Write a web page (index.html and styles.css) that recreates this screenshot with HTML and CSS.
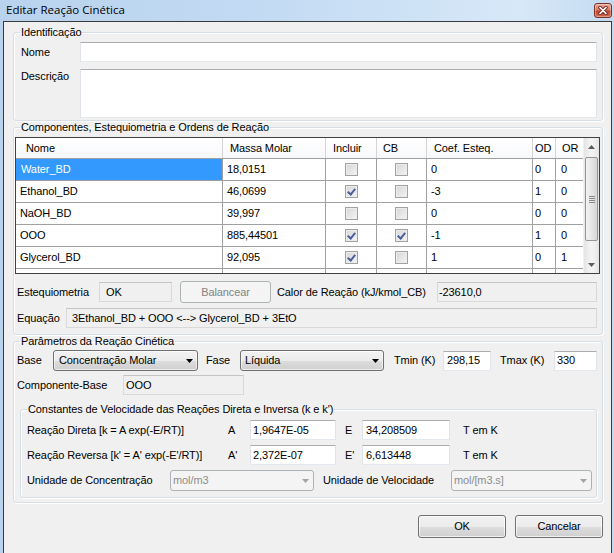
FILE: index.html
```html
<!DOCTYPE html>
<html lang="pt">
<head>
<meta charset="utf-8">
<title>Editar Reação Cinética</title>
<link rel="stylesheet" href="styles.css">
</head>
<body>
<div class="window">
  <div class="titlebar">
    <span class="title">Editar Reação Cinética</span>
    <span class="close"><svg width="10" height="9" viewBox="0 0 10 9"><path d="M2 1.5 L8 7.5 M8 1.5 L2 7.5" stroke="#6b2a20" stroke-width="3.4" stroke-linecap="round"/><path d="M2 1.5 L8 7.5 M8 1.5 L2 7.5" stroke="#fff" stroke-width="1.7" stroke-linecap="round"/></svg></span>
  </div>
  <div class="client">
    <fieldset class="group">
      <legend>Identificação</legend>
      <div class="gbody g1">
        <div class="row h20"><span class="lbl w59">Nome</span><div class="tb grow1"></div></div>
        <div class="row top mt7"><span class="lbl w59 pt1">Descrição</span><div class="tb ta grow1"></div></div>
      </div>
    </fieldset>

    <fieldset class="group mt5">
      <legend>Componentes, Estequiometria e Ordens de Reação</legend>
      <div class="gbody g2">
        <div class="dgv">
          <div class="dgv-main">
            <div class="dgv-head">
              <div class="hc pl10">Nome</div>
              <div class="hc">Massa Molar</div>
              <div class="hc">Incluir</div>
              <div class="hc pl6">CB</div>
              <div class="hc">Coef. Esteq.</div>
              <div class="hc pl2">OD</div>
              <div class="hc pl6">OR</div>
            </div>
            <div class="dgv-body">
              <div class="dc sel">Water_BD</div><div class="dc">18,0151</div><div class="dc ck"><span class="cb"></span></div><div class="dc ck"><span class="cb"></span></div><div class="dc">0</div><div class="dc n">0</div><div class="dc n2">0</div>
              <div class="dc">Ethanol_BD</div><div class="dc">46,0699</div><div class="dc ck"><span class="cb on"></span></div><div class="dc ck"><span class="cb"></span></div><div class="dc">-3</div><div class="dc n">1</div><div class="dc n2">0</div>
              <div class="dc">NaOH_BD</div><div class="dc">39,997</div><div class="dc ck"><span class="cb"></span></div><div class="dc ck"><span class="cb"></span></div><div class="dc">0</div><div class="dc n">0</div><div class="dc n2">0</div>
              <div class="dc">OOO</div><div class="dc">885,44501</div><div class="dc ck"><span class="cb on"></span></div><div class="dc ck"><span class="cb on"></span></div><div class="dc">-1</div><div class="dc n">1</div><div class="dc n2">0</div>
              <div class="dc">Glycerol_BD</div><div class="dc">92,095</div><div class="dc ck"><span class="cb on"></span></div><div class="dc ck"><span class="cb"></span></div><div class="dc">1</div><div class="dc n">0</div><div class="dc n2">1</div>
              <div class="dc"></div><div class="dc"></div><div class="dc"></div><div class="dc"></div><div class="dc"></div><div class="dc"></div><div class="dc"></div>
            </div>
          </div>
          <div class="vscroll">
            <div class="sarrow"><svg width="7" height="4" viewBox="0 0 7 4"><path d="M0 4 L3.5 0 L7 4 Z" fill="#5c5c5c"/></svg></div>
            <div class="strack">
              <div class="thumb"><span class="grip"></span></div>
            </div>
            <div class="sarrow"><svg width="7" height="4" viewBox="0 0 7 4"><path d="M0 0 L7 0 L3.5 4 Z" fill="#5c5c5c"/></svg></div>
          </div>
        </div>

        <div class="row stq">
          <span class="lbl w82">Estequiometria</span>
          <div class="tb ro w73 pad6"><span class="tv">OK</span></div>
          <div class="btn dis w91 ml8">Balancear</div>
          <span class="lbl ml6 w160">Calor de Reação (kJ/kmol_CB)</span>
          <div class="tb ro grow1 pad1"><span class="tv">-23610,0</span></div>
        </div>
        <div class="row h20 mt5 eqrow">
          <span class="lbl w49">Equação</span>
          <div class="tb ro grow1 pad5"><span class="tv">3Ethanol_BD + OOO &lt;--&gt; Glycerol_BD + 3EtO</span></div>
        </div>
      </div>
    </fieldset>

    <fieldset class="group mt5">
      <legend>Parâmetros da Reação Cinética</legend>
      <div class="gbody g3">
        <div class="row h21">
          <span class="lbl w36">Base</span>
          <div class="combo w145 cp5"><span class="cv">Concentração Molar</span><svg class="arr" width="7" height="4" viewBox="0 0 7 4"><path d="M0 0 L7 0 L3.5 4 Z" fill="#000"/></svg></div>
          <span class="lbl ml8 w34">Fase</span>
          <div class="combo w144 cp4"><span class="cv">Líquida</span><svg class="arr" width="7" height="4" viewBox="0 0 7 4"><path d="M0 0 L7 0 L3.5 4 Z" fill="#000"/></svg></div>
          <span class="lbl ml10 w49">Tmin (K)</span>
          <div class="tb w48 pad3"><span class="tv">298,15</span></div>
          <span class="lbl ml9 w54">Tmax (K)</span>
          <div class="tb w43"><span class="tv">330</span></div>
        </div>
        <div class="row h20 mt4">
          <span class="lbl w106">Componente-Base</span>
          <div class="tb ro w121"><span class="tv">OOO</span></div>
        </div>

        <fieldset class="group sub">
          <legend>Constantes de Velocidade das Reações Direta e Inversa (k e k')</legend>
          <div class="gbody g4">
            <div class="row h20">
              <span class="lbl w201">Reação Direta [k = A exp(-E/RT)]</span>
              <span class="lbl w22">A</span>
              <div class="tb w86"><span class="tv">1,9647E-05</span></div>
              <span class="lbl ml9 w17">E</span>
              <div class="tb w88 pad3"><span class="tv">34,208509</span></div>
              <span class="lbl ml13">T em K</span>
            </div>
            <div class="row h20 mt5">
              <span class="lbl w201">Reação Reversa [k' = A' exp(-E'/RT)]</span>
              <span class="lbl w22">A'</span>
              <div class="tb w86"><span class="tv">2,372E-07</span></div>
              <span class="lbl ml9 w17">E'</span>
              <div class="tb w88 pad3"><span class="tv">6,613448</span></div>
              <span class="lbl ml13">T em K</span>
            </div>
            <div class="row h21 mt5">
              <span class="lbl w143">Unidade de Concentração</span>
              <div class="combo dis w144"><span class="cv">mol/m3</span><svg class="arr" width="7" height="4" viewBox="0 0 7 4"><path d="M0 0 L7 0 L3.5 4 Z" fill="#a3a3a3"/></svg></div>
              <span class="lbl ml9 w128">Unidade de Velocidade</span>
              <div class="combo dis w141"><span class="cv">mol/[m3.s]</span><svg class="arr" width="7" height="4" viewBox="0 0 7 4"><path d="M0 0 L7 0 L3.5 4 Z" fill="#a3a3a3"/></svg></div>
            </div>
          </div>
        </fieldset>
      </div>
    </fieldset>

    <div class="buttons">
      <div class="btn w88">OK</div>
      <div class="btn w88">Cancelar</div>
    </div>
  </div>
</div>
</body>
</html>
```

FILE: styles.css
```css
* { box-sizing: border-box; }
html, body { margin: 0; padding: 0; }
body {
  width: 614px;
  height: 553px;
  overflow: hidden;
  font-family: "Liberation Sans", Arial, sans-serif;
  font-size: 11px;
  letter-spacing: -0.1px;
  color: #000;
  background: #c4dbf2;
}
.window {
  height: 553px;
  display: flex;
  flex-direction: column;
  padding: 0 2px 0 3px;
  background: linear-gradient(to right, #b9d2ed 0%, #c3dbf3 45%, #d7e8f8 85%, #c3daf1 100%);
}
.titlebar {
  height: 21px;
  flex: none;
  display: flex;
  align-items: flex-start;
  justify-content: space-between;
  padding-left: 3px;
}
.title {
  font-family: "Open Sans", "Noto Sans", sans-serif;
  font-size: 11.5px;
  letter-spacing: 0;
  line-height: 20px;
  color: #000;
}
.close {
  margin-top: 3px;
  width: 18px;
  height: 15px;
  border: 1px solid #7a3128;
  border-radius: 3px;
  background: linear-gradient(#e8a99b 0%, #d77a66 45%, #c2452f 55%, #d06a50 100%);
  display: flex;
  align-items: center;
  justify-content: center;
  box-shadow: inset 0 0 0 1px rgba(255,255,255,0.35);
}
.client {
  flex: 1;
  background: #f0f0f0;
  border: 1px solid #3a3a3a;
  border-bottom: none;
  padding: 4px 8px 0 9px;
  display: flex;
  flex-direction: column;
}
fieldset.group {
  margin: 0;
  padding: 0;
  min-width: 0;
  border: 1px solid #d5dfe5;
  border-radius: 3px;
  box-shadow: inset 1px 1px 0 #fff, 1px 1px 0 #fff;
}
fieldset.group > legend {
  margin-left: 6px;
  padding: 0 1px;
  line-height: 13px;
  height: 13px;
}
.gbody { display: flex; flex-direction: column; }
.g1 { padding: 3px 5px 2px 7px; }
.g2 { padding: 3px 2px 6px 1px; }
.g3 { padding: 2px 5px 4px 3px; }
.g4 { padding: 4px 3px 6px 6px; }
fieldset.sub { margin: 8px 0 0 3px; }

.row { display: flex; align-items: center; }
.row.top { align-items: flex-start; }
.h20 { height: 20px; }
.h21 { height: 21px; }
.lbl { flex: none; white-space: nowrap; line-height: 13px; }
.pt1 { padding-top: 1px; }
.grow1 { flex: 1; min-width: 0; }
.mt4 { margin-top: 4px; }
.mt5 { margin-top: 5px; }
.mt7 { margin-top: 7px; }
.ml6 { margin-left: 6px; }
.ml8 { margin-left: 8px; }
.ml9 { margin-left: 9px; }
.ml10 { margin-left: 10px; }
.ml13 { margin-left: 13px; }
.w17 { width: 17px; }
.w22 { width: 22px; }
.w34 { width: 34px; }
.w36 { width: 36px; }
.w43 { width: 43px; }
.w48 { width: 48px; }
.w49 { width: 49px; }
.w54 { width: 54px; }
.w59 { width: 59px; }
.w73 { width: 73px; }
.w82 { width: 82px; }
.w86 { width: 86px; }
.w88 { width: 88px; }
.w91 { width: 91px; }
.w106 { width: 106px; }
.w121 { width: 121px; }
.w128 { width: 128px; }
.w141 { width: 141px; }
.w143 { width: 143px; }
.w144 { width: 144px; }
.w145 { width: 145px; }
.w160 { width: 160px; }
.w201 { width: 201px; }

/* text boxes */
.tb {
  flex: none;
  height: 20px;
  background: #fff;
  border: 1px solid #e2e3ea;
  border-top-color: #abadb3;
  border-bottom-color: #e3e9ef;
  display: flex;
  align-items: center;
  padding-left: 2px;
  overflow: hidden;
}
.tb.grow1 { flex: 1; }
.tb.ta { height: 49px; }
.tb.ro {
  background: #f0f0f0;
  border-color: #d9d9d9;
  border-top-color: #c4c4c4;
}
.tb.pad1 { padding-left: 1px; }
.tb.pad3 { padding-left: 3px; }
.tb.pad5 { padding-left: 5px; }
.tb.pad6 { padding-left: 6px; }
.tv { white-space: nowrap; line-height: 13px; }

/* buttons */
.btn {
  flex: none;
  height: 23px;
  border: 1px solid #707070;
  border-radius: 3px;
  background: linear-gradient(#f2f2f2 0%, #ebebeb 50%, #dddddd 51%, #cfcfcf 100%);
  box-shadow: inset 0 0 0 1px rgba(255,255,255,0.7);
  display: flex;
  align-items: center;
  justify-content: center;
  line-height: 13px;
}
.btn.dis {
  height: 22px;
  border-color: #adb2b5;
  background: #f4f4f4;
  box-shadow: none;
  color: #838383;
}

/* combos */
.combo {
  flex: none;
  height: 21px;
  border: 1px solid #707070;
  border-radius: 3px;
  background: linear-gradient(#f2f2f2 0%, #ebebeb 50%, #dddddd 51%, #cfcfcf 100%);
  box-shadow: inset 0 0 0 1px rgba(255,255,255,0.6);
  display: flex;
  align-items: center;
  justify-content: space-between;
  padding: 0 4px 0 2px;
}
.combo.cp5 { padding-left: 5px; }
.combo.cp4 { padding-left: 4px; }
.combo.dis {
  border-color: #adb2b5;
  background: #f4f4f4;
  box-shadow: none;
  color: #8d8d8d;
}
.cv { white-space: nowrap; line-height: 13px; }

/* data grid */
.dgv {
  flex: none;
  height: 137px;
  border: 1px solid #404040;
  background: #fff;
  display: flex;
  overflow: hidden;
}
.dgv-main { width: 567px; flex: none; overflow: hidden; }
.dgv-head {
  display: grid;
  grid-template-columns: 206px 102px 50px 49px 105px 22px 27px;
  column-gap: 1px;
  background: #d5d5d5;
  height: 21px;
  border-bottom: 1px solid #a0a0a0;
}
.hc {
  background: linear-gradient(#ffffff, #f7f8fa);
  line-height: 20px;
  padding-left: 7px;
  white-space: nowrap;
  overflow: hidden;
}
.pl10 { padding-left: 10px; }
.pl6 { padding-left: 6px; }
.pl2 { padding-left: 2px; }
.dgv-body {
  display: grid;
  grid-template-columns: 206px 102px 50px 49px 105px 22px 27px;
  grid-auto-rows: 21px;
  gap: 1px;
  background: #a0a0a0;
  padding-bottom: 1px;
}
.dc {
  background: #fff;
  line-height: 21px;
  padding-left: 4px;
  white-space: nowrap;
  overflow: hidden;
}
.dc.sel { background: #3399ff; color: #fff; padding-left: 5px; }
.dc.n { padding-left: 2px; }
.dc.n2 { padding-left: 5px; }
.dc.ck { display: flex; align-items: center; justify-content: center; padding-left: 0; }
.cb {
  width: 13px;
  height: 13px;
  border: 1px solid #a2a2a2;
  background: linear-gradient(135deg, #d6d6d6, #f4f4f4);
  box-shadow: inset 0 0 0 1px #ececec;
  position: relative;
}
.cb.on::after {
  content: "";
  position: absolute;
  left: 3px;
  top: 1px;
  width: 3px;
  height: 6px;
  border: solid #4a5e9c;
  border-width: 0 2px 2px 0;
  transform: rotate(40deg);
}

.vscroll {
  flex: 1;
  display: flex;
  flex-direction: column;
  background: linear-gradient(to right, #e4e4e4, #f2f2f2 40%, #f2f2f2 60%, #e4e4e4);
  border-left: 1px solid #f0f0f0;
}
.sarrow { height: 17px; display: flex; align-items: center; justify-content: center; flex: none; }
.strack { flex: 1; padding: 2px 1px 0 1px; }
.thumb {
  height: 84px;
  border: 1px solid #959595;
  border-radius: 2px;
  background: linear-gradient(to right, #f2f2f2, #e6e6e6 50%, #d6d6d6);
  display: flex;
  align-items: center;
  justify-content: center;
}
.grip {
  width: 6px;
  height: 7px;
  background: repeating-linear-gradient(#8a8a8a 0 1px, transparent 1px 2px);
}

.stq { margin-top: 7px; height: 22px; margin-left: 2px; margin-right: 3px; }
.eqrow { margin-left: 2px; margin-right: 3px; }

.buttons {
  margin-top: 12px;
  display: flex;
  justify-content: flex-end;
  gap: 9px;
}
```
